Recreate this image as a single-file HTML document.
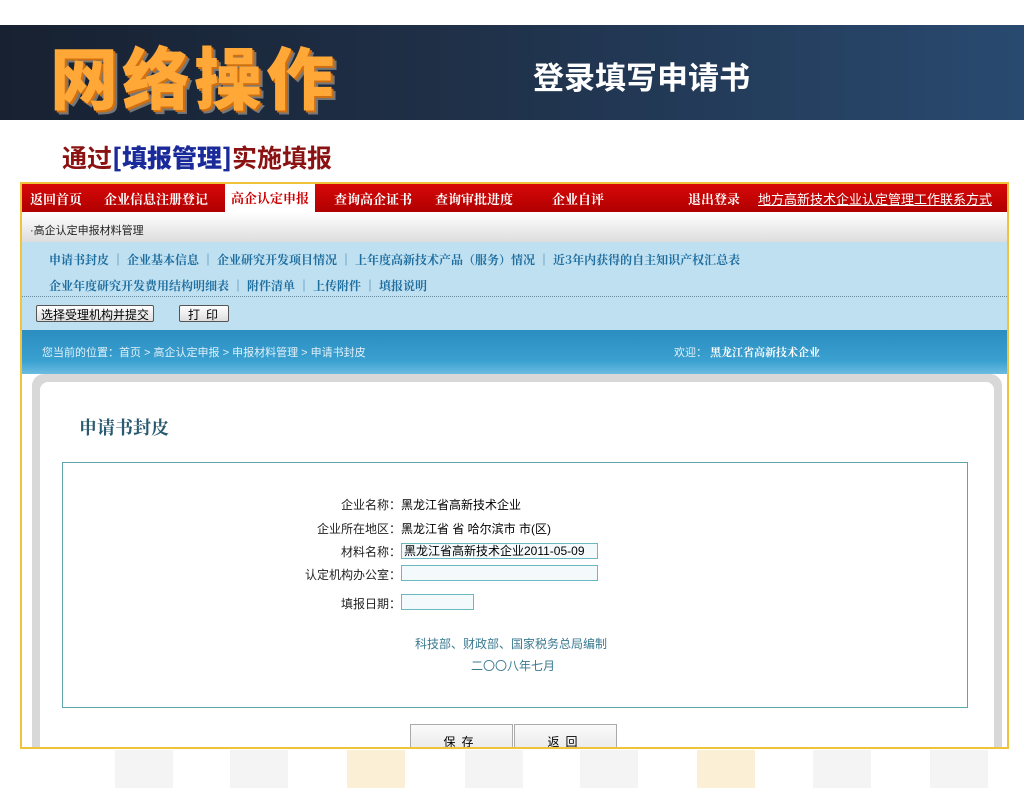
<!DOCTYPE html>
<html><head><meta charset="utf-8"><style>
*{margin:0;padding:0;box-sizing:border-box}
body{width:1024px;height:768px;background:#fff;position:relative;overflow:hidden;font-family:"Liberation Sans","Noto Sans CJK SC",sans-serif}
.abs{position:absolute}
.hdr{left:0;top:25px;width:1024px;height:95px;background:linear-gradient(90deg,#172131 0%,#1f3048 45%,#294a70 100%)}
.big{left:50px;top:30px;font-size:68px;font-weight:900;color:#ffa838;letter-spacing:4px;text-shadow:2px 2px 0 #d07010,4px 4px 0 #777;font-family:"Noto Sans CJK SC",sans-serif;line-height:90px}
.sub{left:533px;top:53px;font-size:31px;font-weight:bold;color:#fff;font-family:"Noto Sans CJK SC",sans-serif}
.t2{left:62px;top:139px;font-size:25px;font-weight:bold;color:#8b1212;font-family:"Noto Sans CJK SC",sans-serif}
.t2 b{color:#1a2a9a}
.frame{left:20px;top:182px;width:989px;height:567px;border:2px solid #f0c43a;overflow:hidden;background:#fff}
.nav{left:0;top:0;width:985px;height:28px;background:linear-gradient(#d80808,#b00000);color:#fff;font-size:13px;font-weight:bold;font-family:"Noto Serif CJK SC",serif;white-space:nowrap}
.nav span{position:absolute;top:5px}
.gray{left:0;top:28px;width:985px;height:30px;background:linear-gradient(#fff,#ddd);font-size:11px;color:#222;padding:10px 0 0 8px}
.lb{left:0;top:58px;width:985px;height:88px;background:#bfe0f0;font-size:12px;color:#1f6ea0;font-weight:bold;font-family:"Noto Serif CJK SC",serif}
.lb div{position:absolute;left:27px;white-space:nowrap}
.dot{left:0;top:112px!important;width:985px;border-top:1px dotted #6a8ea0}
.btn{top:121px;height:17px;border:1px solid #555;border-radius:2px;background:linear-gradient(#fff,#ddd);font-size:12px;padding:0 4px;color:#000;font-family:"Noto Sans CJK SC",sans-serif;font-weight:normal}
.db{left:0;top:146px;width:985px;height:44px;background:linear-gradient(#2a8ec0,#3aa0d0 70%,#6bbce0);color:#e0f0fa;font-size:11px}
.panel{left:10px;top:190px;width:970px;height:390px;border-radius:12px 12px 0 0;background:#d8d8d8;padding:8px}
.inner{position:absolute;left:8px;top:8px;right:8px;bottom:0;background:#fff;border-radius:8px 8px 0 0}
.box{left:40px;top:278px;width:906px;height:246px;border:1px solid #5fa5ab}
.lab{font-size:12px;color:#222;text-align:right;width:120px;position:absolute}
.inp{position:absolute;height:16px;border:1px solid #6ab8c0;background:#f4fafc;font-size:12px;padding-left:2px;line-height:14px}
.b2{top:540px;height:30px;width:103px;border:1px solid #aaa;background:linear-gradient(#fafafa,#e8e8e8);font-size:12px;text-align:center;padding-top:8px;letter-spacing:6px}
.sq{position:absolute;width:58px;height:38px;background:#f4f4f4}
</style></head><body>
<div class="abs hdr"></div>
<div class="abs big">网络操作</div>
<div class="abs sub">登录填写申请书</div>
<div class="abs t2">通过<b>[填报管理]</b>实施填报</div>
<div class="sq" style="left:115px;top:750px"></div><div class="sq" style="left:230px;top:750px"></div>
<div class="sq" style="left:347px;top:750px;background:#fbf0d6"></div><div class="sq" style="left:465px;top:750px"></div>
<div class="sq" style="left:580px;top:750px"></div><div class="sq" style="left:697px;top:750px;background:#fbf0d6"></div>
<div class="sq" style="left:813px;top:750px"></div><div class="sq" style="left:930px;top:750px"></div>
<div class="abs frame">
 <div class="abs nav">
  <span style="left:8px">返回首页</span><span style="left:82px">企业信息注册登记</span>
  <span style="left:203px;top:0;height:28px;background:#fff;color:#c00;padding:4px 6px">高企认定申报</span>
  <span style="left:312px">查询高企证书</span><span style="left:413px">查询审批进度</span><span style="left:530px">企业自评</span>
  <span style="left:666px">退出登录</span><span style="left:736px;font-weight:normal;text-decoration:underline;font-family:'Noto Sans CJK SC',sans-serif">地方高新技术企业认定管理工作联系方式</span>
 </div>
 <div class="abs gray">·高企认定申报材料管理</div>
 <div class="abs lb">
  <div style="top:9px">申请书封皮 ｜ 企业基本信息 ｜ 企业研究开发项目情况 ｜ 上年度高新技术产品（服务）情况 ｜ 近3年内获得的自主知识产权汇总表</div>
  <div style="top:35px">企业年度研究开发费用结构明细表 ｜ 附件清单 ｜ 上传附件 ｜ 填报说明</div>
 </div>
 <div class="abs dot"></div>
 <div class="abs btn" style="left:14px">选择受理机构并提交</div>
 <div class="abs btn" style="left:157px;letter-spacing:6px;padding-left:8px">打印</div>
 <div class="abs db"><span class="abs" style="left:20px;top:14px">您当前的位置：首页 &gt; 高企认定申报 &gt; 申报材料管理 &gt; 申请书封皮</span><span class="abs" style="left:652px;top:14px">欢迎： <b style="color:#fff;font-family:'Noto Serif CJK SC',serif">黑龙江省高新技术企业</b></span></div>
 <div class="abs panel"><div class="inner"></div></div>
 <div class="abs" style="left:57px;top:230px;font-size:18px;font-weight:bold;color:#2a5a70;font-family:'Noto Serif CJK SC',serif">申请书封皮</div>
 <div class="abs box">
  <div class="lab" style="left:218px;top:33px">企业名称：</div><div class="abs" style="left:338px;top:33px;font-size:12px">黑龙江省高新技术企业</div>
  <div class="lab" style="left:218px;top:57px">企业所在地区：</div><div class="abs" style="left:338px;top:57px;font-size:12px">黑龙江省 省 哈尔滨市 市(区)</div>
  <div class="lab" style="left:218px;top:80px">材料名称：</div><div class="inp" style="left:338px;top:80px;width:197px">黑龙江省高新技术企业2011-05-09</div>
  <div class="lab" style="left:218px;top:103px">认定机构办公室：</div><div class="inp" style="left:338px;top:102px;width:197px"></div>
  <div class="lab" style="left:218px;top:132px">填报日期：</div><div class="inp" style="left:338px;top:131px;width:73px"></div>
  <div class="abs" style="left:352px;top:172px;font-size:12px;color:#3a7a90">科技部、财政部、国家税务总局编制</div>
  <div class="abs" style="left:408px;top:194px;font-size:12px;color:#3a7a90">二〇〇八年七月</div>
 </div>
 <div class="abs b2" style="left:388px">保存</div>
 <div class="abs b2" style="left:492px">返回</div>
</div>
</body></html>
